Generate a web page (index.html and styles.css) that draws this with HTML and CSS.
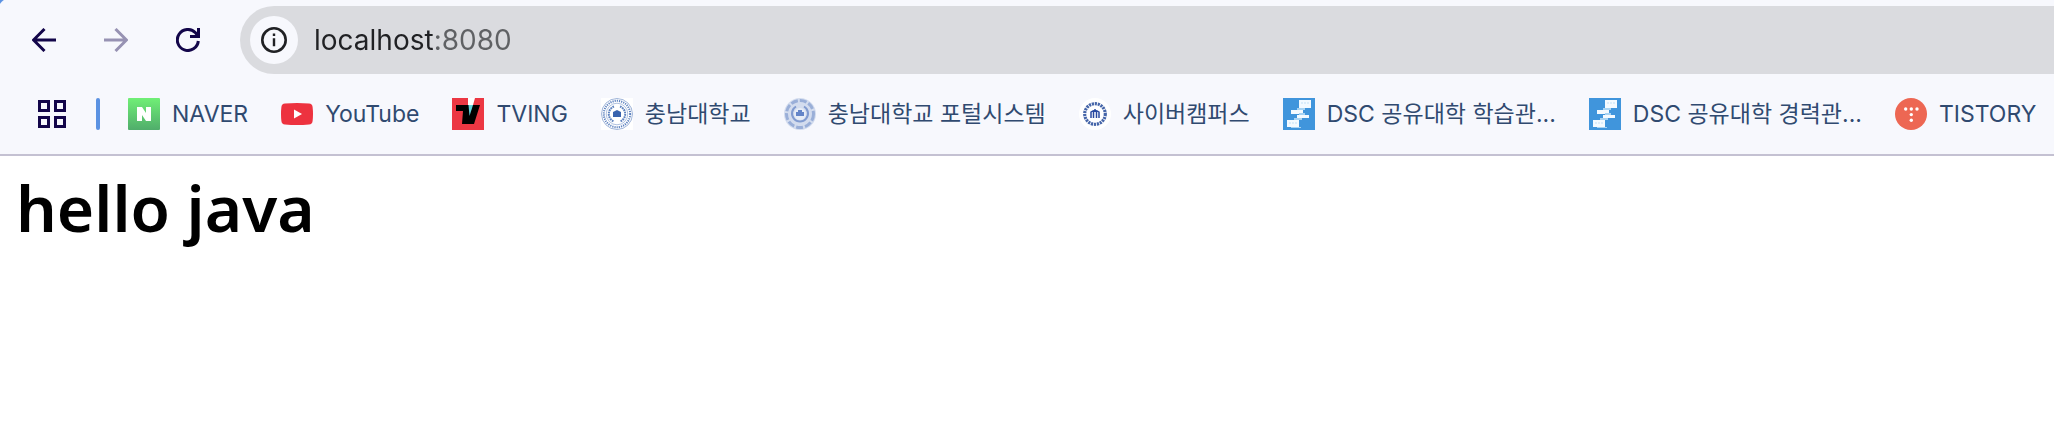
FILE: index.html
```html
<!DOCTYPE html>
<html lang="ko">
<head>
<meta charset="utf-8">
<title>localhost:8080</title>
<link rel="stylesheet" href="styles.css">
</head>
<body>
<header class="chrome">
  <div class="toolbar">
    <nav class="nav" aria-label="Navigation">
      <button class="nav-button" type="button" aria-label="Back">
        <svg width="24" height="24" viewBox="0 0 24 24"><path d="M24 12H2M12.500 1L1.500 12l11 11" fill="none" stroke="currentColor" stroke-width="3"/></svg>
      </button>
      <button class="nav-button" type="button" aria-label="Forward" disabled>
        <svg width="24" height="24" viewBox="0 0 24 24"><path d="M0 12h22M11.500 1l11 11-11 11" fill="none" stroke="currentColor" stroke-width="3"/></svg>
      </button>
      <button class="nav-button" type="button" aria-label="Reload">
        <svg width="24" height="24" viewBox="0 0 24 24"><path d="M22.300 13A10.500 10.500 0 1 1 19.500 4.800l2 2.500" fill="none" stroke="currentColor" stroke-width="3"/><path d="M22.500 0v8.500H14" fill="none" stroke="currentColor" stroke-width="3"/></svg>
      </button>
    </nav>
    <form class="address">
      <button class="site-info" type="button" aria-label="Site information">
        <svg width="26" height="26" viewBox="0 0 26 26"><circle cx="13" cy="13" r="11.700" fill="none" stroke="currentColor" stroke-width="2.600"/><path d="M13 11.200v8M13 6.600v2.500" stroke="currentColor" stroke-width="2.400"/></svg>
      </button>
      <input class="address-input" type="text" value="localhost:8080" aria-label="Address" spellcheck="false">
    </form>
  </div>
  <nav class="bookmarks" aria-label="Bookmarks">
    <button class="apps" type="button" aria-label="Apps">
      <svg width="28" height="28" viewBox="0 0 28 28" fill="none" stroke="currentColor" stroke-width="3"><path d="M1.500 1.500h9v9h-9zM17.500 1.500h9v9h-9zM1.500 17.500h9v9h-9zM17.500 17.500h9v9h-9z"/></svg>
    </button>
    <span class="divider"></span>
    <a class="bookmark" href="#">
      <svg class="favicon" viewBox="0 0 32 32"><defs><linearGradient id="green" x2="0" y2="1"><stop stop-color="#70ef76"/><stop offset="1" stop-color="#50ad6b"/></linearGradient></defs><rect width="32" height="32" rx="1" fill="url(#green)"/><path d="M9 9h5l4 6V9h5v14h-5l-4-6v6H9z" fill="#fff"/></svg>
      <span>NAVER</span>
    </a>
    <a class="bookmark" href="#">
      <svg class="favicon" viewBox="0 0 32 32"><path d="M4 5.500Q16 4.500 28 5.500q3.300.2 3.600 3.500.8 7 0 14-.3 3.300-3.600 3.500-12 1-24 0Q.7 26.300.4 23q-.8-7 0-14Q.7 5.700 4 5.500z" fill="#ed323f"/><path d="M13 11.500l8 4.500-8 4.500z" fill="#fff"/></svg>
      <span>YouTube</span>
    </a>
    <a class="bookmark" href="#">
      <svg class="favicon" viewBox="0 0 32 32"><path d="M0 0h32v32H0z" fill="#ec3743"/><path d="M4 7h24l-6 19H10l1-13H4z" fill="#000"/><path d="M16 0h7l-2 7h-5z" fill="#fff"/><path d="M16.500 7H21l-3.500 11z" fill="#62d5dd"/></svg>
      <span>TVING</span>
    </a>
    <a class="bookmark" href="#">
      <svg class="favicon" viewBox="0 0 32 32"><path d="M0 0h32v32H0z" fill="#fff"/><g fill="none" stroke="#5f83bf"><circle cx="16" cy="16" r="15.500" stroke-width=".6"/><circle cx="16" cy="16" r="13.200" stroke-width="2" stroke-dasharray="1.200 1"/><circle cx="16" cy="16" r="10.800" stroke-width=".5"/><path d="M13 8.500a8 8 0 0 0 0 15M19 8.500a8 8 0 0 1 0 15" stroke-width="2" stroke-dasharray="1.700 .7"/></g><path d="M12 14l4-2 4 2v5h-8z" fill="#3863ae"/></svg>
      <span>충남대학교</span>
    </a>
    <a class="bookmark" href="#">
      <svg class="favicon" viewBox="0 0 32 32"><circle cx="16" cy="16" r="16" fill="#d3dcee"/><g fill="none" stroke="#9aafd8"><circle cx="16" cy="16" r="13.500" stroke-width="3" stroke-dasharray="7 2"/><path d="M12 8.500a8 8 0 1 0 8 0" stroke="#819bd0" stroke-width="2"/></g><circle cx="16" cy="16" r="6" fill="#e7edf7"/><path d="M12 14h2v-2h4v2h2v4h-8z" fill="#6485c8"/></svg>
      <span>충남대학교 포털시스템</span>
    </a>
    <a class="bookmark" href="#">
      <svg class="favicon" viewBox="0 0 32 32"><circle cx="16" cy="16" r="16" fill="#fff"/><g fill="none" stroke="#4666a9"><circle cx="16" cy="16" r="10.300" stroke-width="3.200" stroke-dasharray="2.200 .8"/><path d="M12 20v-6q4-3 8 0v6M14.500 13.500V20M17.500 13.500V20M16 11v3" stroke="#2848a0" stroke-width="1.500"/></g></svg>
      <span>사이버캠퍼스</span>
    </a>
    <a class="bookmark" href="#">
      <svg class="favicon" viewBox="0 0 32 32"><path d="M0 0h32v32H0z" fill="#4095dc"/><path d="M16 2h12v8H16zM8 12h12v4H8zM14 17h12v3H14zM4 22h12v7H4z" fill="#f4faff"/><path d="M14 10h8v2h-8zM16 15h6v2h-6zM11 20h8v2h-8zM8 29h10v1H8z" fill="#a7d3f3"/><path d="M18 5h9M6 25h8" stroke="#c2e0f7" stroke-dasharray="2 1"/></svg>
      <span>DSC 공유대학 학습관...</span>
    </a>
    <a class="bookmark" href="#">
      <svg class="favicon" viewBox="0 0 32 32"><path d="M0 0h32v32H0z" fill="#4095dc"/><path d="M16 2h12v8H16zM8 12h12v4H8zM14 17h12v3H14zM4 22h12v7H4z" fill="#f4faff"/><path d="M14 10h8v2h-8zM16 15h6v2h-6zM11 20h8v2h-8zM8 29h10v1H8z" fill="#a7d3f3"/><path d="M18 5h9M6 25h8" stroke="#c2e0f7" stroke-dasharray="2 1"/></svg>
      <span>DSC 공유대학 경력관...</span>
    </a>
    <a class="bookmark" href="#">
      <svg class="favicon" viewBox="0 0 32 32"><circle cx="16" cy="16" r="16" fill="#ed6753"/><g fill="#fff"><circle cx="10.700" cy="11" r="1.700"/><circle cx="16.300" cy="11" r="1.700"/><circle cx="22" cy="11" r="1.700"/><circle cx="16.300" cy="16.600" r="1.700"/><circle cx="16.300" cy="22.300" r="1.700"/></g></svg>
      <span>TISTORY</span>
    </a>
  </nav>
</header>
<main class="page"><h1 class="title">hello java</h1></main>
</body>
</html>
```
FILE: styles.css
```css
* { box-sizing: border-box; }
html { background: #fff; }
body {
  margin: 0;
  overflow-x: hidden;
  font-family: Inter, "Noto Sans CJK KR", sans-serif;
}
button {
  display: grid;
  place-items: center;
  padding: 0;
  border: 0;
  background: none;
  color: #13064a;
}
.chrome {
  border-bottom: 2px solid #c4c1d2;
  background: radial-gradient(circle at 12px 12px, #f7f8fd 14px, #5b92e2 15px) 0 0 / 12px 12px no-repeat, #f7f8fd;
}
.toolbar { display: flex; padding-top: 6px; }
.nav { display: flex; gap: 24px; padding: 0 28px 0 20px; }
.nav-button { width: 48px; height: 68px; }
.nav-button:disabled { color: #9792b3; }
.address {
  display: flex;
  flex: 1;
  align-items: center;
  gap: 16px;
  height: 68px;
  padding-left: 10px;
  border-radius: 34px 0 0 34px;
  background: #dadbdf;
}
.site-info {
  width: 48px;
  height: 48px;
  border-radius: 50%;
  background: #f7f8fd;
  color: #202124;
}
.address-input {
  flex: 1;
  min-width: 0;
  height: 48px;
  padding: 0;
  border: 0;
  outline: 0;
  background: linear-gradient(90deg, #202124 121px, #5f6164 121px) text;
  color: transparent;
  font: 28px Inter, sans-serif;
}
.bookmarks {
  display: flex;
  align-items: center;
  gap: 33px;
  height: 80px;
  padding-left: 38px;
}
.apps { flex: none; width: 28px; height: 32px; }
.divider {
  flex: none;
  width: 4px;
  height: 32px;
  margin: 0 -5px 0 -3px;
  border-radius: 2px;
  background: #5b92e2;
}
.bookmark {
  display: flex;
  flex: none;
  align-items: center;
  gap: 12px;
  color: #304a70;
  font-size: 23px;
  line-height: 32px;
  text-decoration: none;
  white-space: nowrap;
}
.favicon { width: 32px; height: 32px; }
.page { padding: 8px 16px; }
.title {
  margin: 0;
  color: #000;
  font: 600 64px/88px "Noto Sans", sans-serif;
}
```
